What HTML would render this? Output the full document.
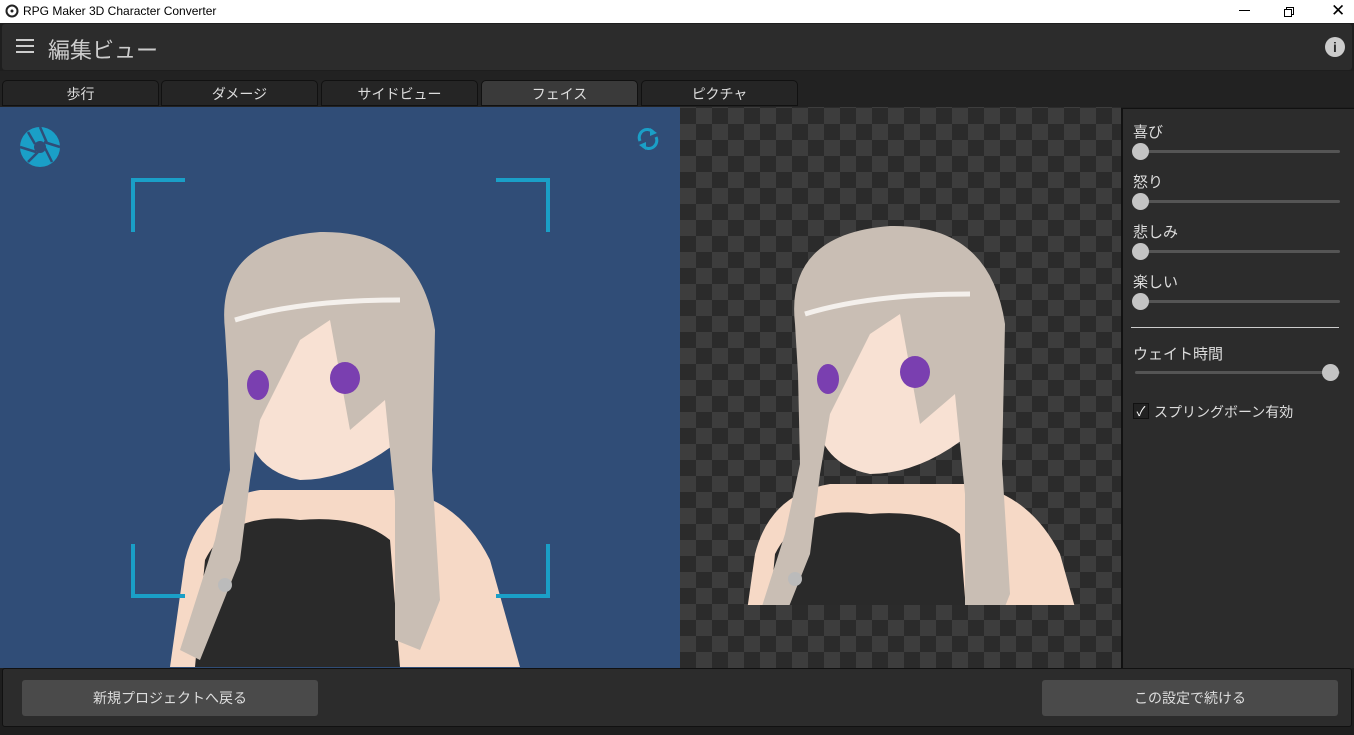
<!DOCTYPE html>
<html><head><meta charset="utf-8"><style>
*{margin:0;padding:0;box-sizing:border-box}
body{width:1354px;height:735px;overflow:hidden;background:#1e1e1e;font-family:"Liberation Sans","Noto Sans CJK JP",sans-serif;position:relative}
.abs{position:absolute}
.title{left:0;top:0;width:1354px;height:23px;background:#fff;font-size:12px;color:#000}
.hdr{left:2px;top:24px;width:1350px;height:46px;background:#2c2c2c;border-radius:3px}
.tabbar{left:0;top:71px;width:1354px;height:36px;background:#222}
.tab{top:80px;height:26px;width:157px;background:#252525;border:1px solid #111;border-radius:5px 5px 0 0;color:#ddd;font-size:14px;text-align:center;line-height:26px}
.tab.on{background:#3a3a3a}
.left{left:0;top:107px;width:680px;height:561px;background:#304d77;overflow:hidden}
.chk{left:680px;top:107px;width:441px;height:561px;background-color:#2b2b2b;background-image:linear-gradient(45deg,#3d3d3d 25%,transparent 25%,transparent 75%,#3d3d3d 75%),linear-gradient(45deg,#3d3d3d 25%,transparent 25%,transparent 75%,#3d3d3d 75%);background-size:32px 32px;background-position:0 1px,16px 17px;overflow:hidden}
.panel{left:1121px;top:108px;width:233px;height:560px;background:#2c2c2c;border-left:2px solid #111;border-top:1px solid #111}
.lbl{color:#ddd;font-size:15px;left:10px}
.track{left:12px;width:205px;height:3px;background:#555;border-radius:2px}
.knob{width:17px;height:17px;border-radius:50%;background:#c4c4c4}
.bottom{left:2px;top:668px;width:1350px;height:59px;background:#2c2c2c;border:1px solid #111;border-radius:3px}
.btn{top:680px;height:36px;background:#4a4a4a;border-radius:3px;color:#ddd;font-size:14px;text-align:center;line-height:36px}
.corner{width:54px;height:54px;border-color:#1a9fc7;border-style:solid}
</style></head><body>
<div class="abs title">
<svg class="abs" style="left:5px;top:4px" width="14" height="14" viewBox="0 0 14 14"><circle cx="7" cy="7" r="5.5" fill="none" stroke="#222" stroke-width="2"/><circle cx="7" cy="7" r="1.5" fill="#222"/></svg>
<span class="abs" style="left:23px;top:4px">RPG Maker 3D Character Converter</span>
<div class="abs" style="left:1239px;top:10px;width:11px;height:1px;background:#000"></div>
<div class="abs" style="left:1286px;top:7px;width:8px;height:8px;border:1px solid #000"></div>
<div class="abs" style="left:1284px;top:9px;width:8px;height:8px;border:1px solid #000;background:#fff"></div>
<span class="abs" style="left:1331px;top:1px;font-size:17px">✕</span>
</div>
<div class="abs hdr">
<div class="abs" style="left:14px;top:15px;width:18px;height:2px;background:#ccc;box-shadow:0 6px 0 #ccc,0 12px 0 #ccc"></div>
<span class="abs" style="left:46px;top:9px;font-size:22px;color:#ccc">編集ビュー</span>
<div class="abs" style="left:1323px;top:13px;width:20px;height:20px;border-radius:50%;background:#ccc;color:#2c2c2c;font-weight:bold;font-size:14px;text-align:center;line-height:20px">i</div>
</div>
<div class="abs tabbar"></div>
<div class="abs tab" style="left:2px">歩行</div>
<div class="abs tab" style="left:161px">ダメージ</div>
<div class="abs tab" style="left:321px">サイドビュー</div>
<div class="abs tab on" style="left:481px">フェイス</div>
<div class="abs tab" style="left:641px">ピクチャ</div>

<div class="abs left">
<svg width="680" height="561" viewBox="0 107 680 561" style="position:absolute;left:0;top:0">
<defs><g id="ch">
<path d="M170 667 L185 560 Q200 500 260 490 L400 490 Q460 500 490 560 L520 667Z" fill="#f6d9c6"/>
<path d="M195 667 L205 560 Q230 510 300 520 Q360 515 390 540 L400 667Z" fill="#2a2a2a"/>
<path d="M240 300 Q250 270 330 280 Q410 280 410 360 L400 440 Q350 480 300 480 Q250 470 245 420Z" fill="#f8e1d3"/>
<path d="M225 330 Q215 240 320 232 Q420 230 435 330 L432 470 L440 600 L420 650 L395 640 L395 500 L385 400 L350 430 L330 320 L300 340 L260 420 L250 480 L240 560 L200 660 L180 650 L215 540 L230 470 L228 380Z" fill="#c9beb4"/>
<path d="M235 320 Q300 300 400 300" stroke="#f4f0ec" stroke-width="5" fill="none"/>
<ellipse cx="258" cy="385" rx="11" ry="15" fill="#7a3fb0"/>
<ellipse cx="345" cy="378" rx="15" ry="16" fill="#7a3fb0"/>
<circle cx="225" cy="585" r="7" fill="#bbb"/>
</g></defs>
<use href="#ch"/>
</svg>
<svg class="abs" style="left:19px;top:19px" width="42" height="42" viewBox="0 0 42 42"><circle cx="21" cy="21" r="20" fill="#1a9fc7"/><path d="M21 1 L28 17 M41 21 L25 16 M33 36 L26 22 M9 36 L19 26 M1 21 L17 26 M9 6 L16 18" stroke="#304d77" stroke-width="2.5"/><circle cx="21" cy="21" r="6" fill="#304d77"/></svg>
<svg class="abs" style="left:636px;top:18px" width="24" height="28" viewBox="0 0 24 28"><path d="M4 16 A8 8 0 0 1 17 7 M20 12 A8 8 0 0 1 7 21" stroke="#1a9fc7" stroke-width="3" fill="none"/><path d="M14 3 L21 8 L14 11Z M10 25 L3 20 L10 17Z" fill="#1a9fc7"/></svg>
<div class="abs corner" style="left:131px;top:71px;border-width:4px 0 0 4px"></div>
<div class="abs corner" style="left:496px;top:71px;border-width:4px 4px 0 0"></div>
<div class="abs corner" style="left:131px;top:437px;border-width:0 0 4px 4px"></div>
<div class="abs corner" style="left:496px;top:437px;border-width:0 4px 4px 0"></div>
</div>
<div class="abs chk">
<svg width="441" height="498" viewBox="680 107 441 498" style="position:absolute;left:0;top:0">
<use href="#ch" transform="translate(570,-6)"/>
</svg>
</div>
<div class="abs panel">
<span class="abs lbl" style="top:12px">喜び</span><div class="abs track" style="top:41px"></div><div class="abs knob" style="left:9px;top:34px"></div>
<span class="abs lbl" style="top:62px">怒り</span><div class="abs track" style="top:91px"></div><div class="abs knob" style="left:9px;top:84px"></div>
<span class="abs lbl" style="top:112px">悲しみ</span><div class="abs track" style="top:141px"></div><div class="abs knob" style="left:9px;top:134px"></div>
<span class="abs lbl" style="top:162px">楽しい</span><div class="abs track" style="top:191px"></div><div class="abs knob" style="left:9px;top:184px"></div>
<div class="abs" style="left:8px;top:218px;width:208px;height:1px;background:#ccc"></div>
<span class="abs lbl" style="top:234px">ウェイト時間</span><div class="abs track" style="top:262px"></div><div class="abs knob" style="left:199px;top:255px"></div>
<div class="abs" style="left:10px;top:294px;width:16px;height:16px;border:1px solid #111;background:#222;color:#fff;font-size:13px;line-height:15px;text-align:center">✓</div>
<span class="abs lbl" style="left:31px;top:293px;font-size:14px">スプリングボーン有効</span>
</div>
<div class="abs bottom"></div>
<div class="abs btn" style="left:22px;width:296px">新規プロジェクトへ戻る</div>
<div class="abs btn" style="left:1042px;width:296px">この設定で続ける</div>
</body></html>
